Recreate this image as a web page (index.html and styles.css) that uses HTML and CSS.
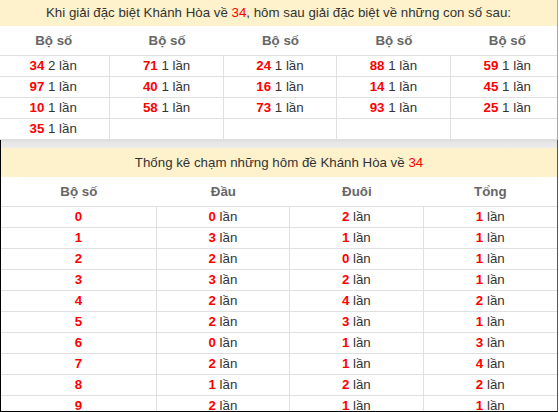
FILE: index.html
```html
<!DOCTYPE html>
<html lang="vi">
<head>
<meta charset="utf-8">
<link rel="stylesheet" href="styles.css">
</head>
<body>
<div class="page">
  <section class="block block-top">
    <div class="title">Khi giải đặc biệt Khánh Hòa về <span class="red">34</span>, hôm sau giải đặc biệt về những con số sau:</div>
    <table class="grid grid5">
      <thead>
        <tr><th>Bộ số</th><th>Bộ số</th><th>Bộ số</th><th>Bộ số</th><th>Bộ số</th></tr>
      </thead>
      <tbody>
        <tr><td><b>34</b> 2 lần</td><td><b>71</b> 1 lần</td><td><b>24</b> 1 lần</td><td><b>88</b> 1 lần</td><td><b>59</b> 1 lần</td></tr>
        <tr><td><b>97</b> 1 lần</td><td><b>40</b> 1 lần</td><td><b>16</b> 1 lần</td><td><b>14</b> 1 lần</td><td><b>45</b> 1 lần</td></tr>
        <tr><td><b>10</b> 1 lần</td><td><b>58</b> 1 lần</td><td><b>73</b> 1 lần</td><td><b>93</b> 1 lần</td><td><b>25</b> 1 lần</td></tr>
        <tr><td><b>35</b> 1 lần</td><td></td><td></td><td></td><td></td></tr>
      </tbody>
    </table>
  </section>
  <section class="block block-bottom">
    <div class="sep"></div>
    <div class="title title-low">Thống kê chạm những hôm đề Khánh Hòa về <span class="red">34</span></div>
    <table class="grid grid4">
      <colgroup><col class="c-first"><col><col><col></colgroup>
      <thead>
        <tr><th>Bộ số</th><th>Đầu</th><th>Đuôi</th><th>Tổng</th></tr>
      </thead>
      <tbody>
        <tr><td><b>0</b></td><td><b>0</b> lần</td><td><b>2</b> lần</td><td><b>1</b> lần</td></tr>
        <tr><td><b>1</b></td><td><b>3</b> lần</td><td><b>1</b> lần</td><td><b>1</b> lần</td></tr>
        <tr><td><b>2</b></td><td><b>2</b> lần</td><td><b>0</b> lần</td><td><b>1</b> lần</td></tr>
        <tr><td><b>3</b></td><td><b>3</b> lần</td><td><b>2</b> lần</td><td><b>1</b> lần</td></tr>
        <tr><td><b>4</b></td><td><b>2</b> lần</td><td><b>4</b> lần</td><td><b>2</b> lần</td></tr>
        <tr><td><b>5</b></td><td><b>2</b> lần</td><td><b>3</b> lần</td><td><b>1</b> lần</td></tr>
        <tr><td><b>6</b></td><td><b>0</b> lần</td><td><b>1</b> lần</td><td><b>3</b> lần</td></tr>
        <tr><td><b>7</b></td><td><b>2</b> lần</td><td><b>1</b> lần</td><td><b>4</b> lần</td></tr>
        <tr><td><b>8</b></td><td><b>1</b> lần</td><td><b>2</b> lần</td><td><b>2</b> lần</td></tr>
        <tr><td><b>9</b></td><td><b>2</b> lần</td><td><b>1</b> lần</td><td><b>1</b> lần</td></tr>
      </tbody>
    </table>
  </section>
</div>
</body>
</html>
```
FILE: styles.css
```css
* { box-sizing: border-box; }
html, body { margin: 0; padding: 0; background: #fff; }
body {
  font-family: "Liberation Sans", Arial, sans-serif;
  font-size: 13.3px;
  color: #333;
}
.page { width: 558px; }
.block { border-right: 1px solid #a8a8a8; overflow: hidden; }
.block-bottom {
  height: 272px;
  border-left: 1px solid #000;
  border-bottom: 1px solid #000;
  border-right-color: #555;
}
.title {
  background: #fdf2cc;
  height: 26px;
  line-height: 26px;
  text-align: center;
  white-space: nowrap;
}
.title-low { height: 29px; line-height: 29px; }
.sep {
  height: 8px;
  background: linear-gradient(#dcdcdc, #e6e6e6 30%, #ececec);
}
.red { color: #f00; }
.grid {
  width: 100%;
  border-collapse: separate;
  border-spacing: 0;
  table-layout: fixed;
}
.grid5 {
  width: 567px;
  margin-left: -3px;
}
.grid th {
  height: 30px;
  padding: 0;
  font-weight: bold;
  font-size: 13.3px;
  color: #666;
  text-align: center;
  border-bottom: 1px solid #e0e0e0;
  vertical-align: middle;
}
.grid td {
  height: 21px;
  padding: 0;
  text-align: center;
  vertical-align: middle;
  border-bottom: 1px solid #e0e0e0;
  border-right: 1px solid #e0e0e0;
  line-height: 20px;
}
.grid td:last-child { border-right: 0; }
.grid td b { color: #f00; font-weight: bold; }
.c-first { width: 28%; }
```
